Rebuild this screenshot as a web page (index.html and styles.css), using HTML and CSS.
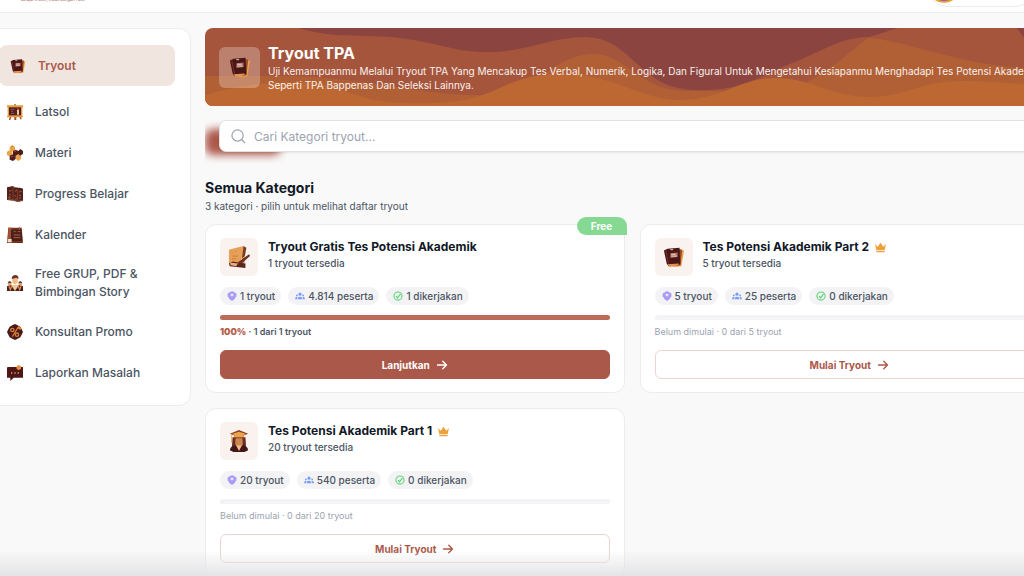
FILE: index.html
```html
<!DOCTYPE html>
<html lang="id">
  <head>
    <meta charset="utf-8">
    <meta name="viewport" content="width=device-width, initial-scale=1">
    <title>Tryout TPA</title>
    <link rel="stylesheet" href="styles.css">
  </head>
  <body>
    <!-- shared icons -->
    <svg class="sprite" aria-hidden="true">
      <symbol id="book" viewBox="0 0 24 24">
        <path d="M13 4l10 1-3 17-9 1z" fill="#eda348"/>
        <path d="M16 3l5 1-2 17-5 1z" fill="#9b4b2c"/>
        <path d="M1 5l4-2 13-1 1 18-13 2-2-3z" fill="#4a1716"/>
        <path d="M3 5l3 14" stroke="#7c3428" stroke-width="1"/>
        <path d="M5 20l12-1v2L7 23z" fill="#df9256"/>
        <path d="M8 8l8-1v5l-8 1z" fill="#a86d62"/>
        <path d="M9 9h5M9 11h6M8 4h3" stroke="#f6dccb" stroke-width="1"/>
      </symbol>
      <symbol id="board" viewBox="0 0 24 24">
        <path d="M11 0h2v4h-2zM4 18h3l-2 6H3zM11 18h3v6h-3zM18 18h3l1 5h-2z" fill="#a54b28"/>
        <path d="M0 2h24v3h-1v13h1v2H0v-2h1V5H0z" fill="#e69a41"/>
        <path d="M3 5h18v12H3z" fill="#54201d"/>
        <path d="M6 8h5M6 11h3M6 14h5" stroke="#a87362" stroke-width="1"/>
        <path d="M15 8h3v8h-3z" fill="#f1c8a2"/>
        <path d="M16 6v3" stroke="#a64631" stroke-width="2"/>
      </symbol>
      <symbol id="hex" viewBox="0 0 24 24">
        <path d="M8 0l4 3v5l-4 2-4-2V3zM4 8l4 2v5l-4 2-4-2v-5zM17 14l4 2v5l-4 3-4-3v-5z" fill="#e9a448"/>
        <path d="M13 7l4 2v5l-4 2-4-2V9zM20 6l4 3v4l-4 3-3-2V9zM9 14l4 2v5l-4 3-5-2v-6z" fill="#501b18"/>
        <path d="M6 3l3-1M11 10l3-1M6 18l3-1" stroke="#c37338" stroke-width="1"/>
      </symbol>
      <symbol id="progress" viewBox="0 0 24 24">
        <path d="M0 2l9-2 2 2 10 1 3 1v18l-8 2-6-2-10-1z" fill="#51201b"/>
        <path d="M9 2v20M16 5v17" stroke="#a24d32" stroke-width="1"/>
        <path d="M3 7l2 1 2-2M3 12l3 2M3 19v-3l3 2M12 8l3-2M11 14l3 2M12 20l3-1M18 9l4-1M18 14h3M18 19l3-2" stroke="#c5814f" stroke-width="1" fill="none"/>
        <path d="M1 20l8 1 7 2 7-1" stroke="#b2634c" fill="none"/>
      </symbol>
      <symbol id="calendar" viewBox="0 0 24 24">
        <path d="M2 1h20l2 23H0z" fill="#76321f"/>
        <path d="M2 1h5v19H1z" fill="#9c5130"/>
        <path d="M6 4h16l1 17H6z" fill="#48201c"/>
        <path d="M1 18h6v5H1z" fill="#f4d7c6"/>
        <path d="M4 1v3M19 0v4M10 7h3M16 7h4M10 12h10M10 16h10" stroke="#b85d3a" stroke-width="1.5"/>
      </symbol>
      <symbol id="people" viewBox="0 0 24 24">
        <path d="M0 24v-7l5-2h14l5 2v7z" fill="#47211e"/>
        <circle cx="4" cy="13" r="3" fill="#dca077"/>
        <circle cx="20" cy="13" r="3" fill="#dca077"/>
        <path d="M1 12q3-6 6 0zM17 12q3-6 6 0z" fill="#7a3927"/>
        <path d="M8 5q4-6 8 0v6q-4 6-8 0z" fill="#efbb88"/>
        <path d="M7 6q0-6 6-6 5 1 4 6l-3-2z" fill="#6b3428"/>
        <path d="M6 15h12l-6 9z" fill="#f4c595"/>
        <path d="M3 17l2 5 2-5M17 17l2 5 2-5" stroke="#dc8949" stroke-width="2" fill="none"/>
      </symbol>
      <symbol id="promo" viewBox="0 0 24 24">
        <path d="M12 0l4 2 4 2 2 4 2 4-2 4-2 4-4 2-4 2-4-2-4-2-2-4-2-4 2-4 2-4 4-2z" fill="#491a17"/>
        <path d="M16 6L8 19" stroke="#d77b39" stroke-width="2"/>
        <circle cx="8" cy="9" r="2.5" fill="none" stroke="#d77b39" stroke-width="2"/>
        <circle cx="15" cy="16" r="2.500" fill="none" stroke="#d77b39" stroke-width="2"/>
        <path d="M17 3l5 3-2 3-5-3z" fill="#e28a36"/>
      </symbol>
      <symbol id="report" viewBox="0 0 24 24">
        <path d="M1 3h22q1 0 1 1v15H10l-5 5v-5H0V4z" fill="#4c1716"/>
        <path d="M15 1l3-1 3 2v4l-4 2-3-3z" fill="#e29042"/>
        <path d="M6 12h2M11 12h2M16 12h2" stroke="#dd9b58" stroke-width="2"/>
      </symbol>
      <symbol id="scroll" viewBox="0 0 24 24">
        <path d="M1 4l4-1 12-3 2 4-1 15-9 3-8-2z" fill="#e7a057"/>
        <path d="M17 0l3 2-3 16-2-2z" fill="#7b3925"/>
        <path d="M1 19l4-2 14 2v5L2 22z" fill="#5b251e"/>
        <path d="M2 18l9 1-2 3-6-1z" fill="#e8ad79"/>
        <path d="M23 9l1 2-8 7-6 3 2-4z" fill="#692d23"/>
        <path d="M14 15l5-4" stroke="#f0bc81" stroke-width="1"/>
        <path d="M4 7h1M8 6h1M5 11h6M4 14h5" stroke="#c87d40" stroke-width="1"/>
      </symbol>
      <symbol id="graduate" viewBox="0 0 24 24">
        <path d="M5 8h14l1 14H4z" fill="#6a2b22"/>
        <path d="M8 6h8v10q-4 6-8 0z" fill="#cb8752"/>
        <path d="M7 8q5-4 10 0v5q-1-4-3-5-2 1-4 0-2 1-3 5z" fill="#7a3423"/>
        <path d="M2 4l10-4 10 4-5 2v3H7V6z" fill="#8d4124"/>
        <path d="M5 4l7-2 7 2-2 2v2H7V6z" fill="#eda34b"/>
        <path d="M2 22q1-5 6-5l4 4 4-4q5 0 6 5l-4 2H6z" fill="#431718"/>
        <path d="M9 17l3 6 3-6z" fill="#f1c092"/>
        <path d="M4 5v9" stroke="#e8a454" stroke-width="1"/>
      </symbol>
      <symbol id="layers" viewBox="0 0 16 16">
        <path d="M8 9l5-2v5l-5 4-5-4V7z" fill="#ab9af3"/>
        <path d="M1 4l7-4 7 4v5l-7 4-7-4z" fill="#ab9af3"/>
        <path d="M5 6l3-2 3 2-3 3z" fill="#eeeafd"/>
      </symbol>
      <symbol id="users" viewBox="0 0 16 16">
        <circle cx="8" cy="5" r="2.5"/>
        <circle cx="3" cy="7" r="1.5"/>
        <circle cx="13" cy="7" r="1.5"/>
        <path d="M4 13q0-4 4-4t4 4zM0 13q0-4 3-4 1 0 1 1-1 1-1 3zM16 13q0-4-3-4-1 0-1 1 1 1 1 3z"/>
      </symbol>
      <symbol id="check" viewBox="0 0 16 16">
        <circle cx="8" cy="8" r="6.5" fill="none" stroke="currentColor" stroke-width="1.8"/>
        <path d="M5 8l2 3 5-6" fill="none" stroke="currentColor" stroke-width="2"/>
      </symbol>
      <symbol id="crown" viewBox="0 0 16 16">
        <path d="M0 3l4 4 4-6 4 6 4-4-2 9H2zM2 13h12v2H2z"/>
      </symbol>
      <symbol id="arrow" viewBox="0 0 16 16">
        <path d="M2 8h12M9 3l5 5-5 5" fill="none" stroke="currentColor" stroke-width="1.8" stroke-linecap="round" stroke-linejoin="round"/>
      </symbol>
    </svg>

    <div class="app">
      <header class="topbar">
        <p class="tagline">Belajar Efektif, Lulus dengan Pasti</p>
        <div class="profile"><span class="avatar"></span></div>
      </header>

      <div class="layout">
        <nav class="sidebar">
          <a class="nav-item active" href="#"><svg class="nav-icon"><use href="#book"/></svg>Tryout</a>
          <a class="nav-item" href="#"><svg class="nav-icon"><use href="#board"/></svg>Latsol</a>
          <a class="nav-item" href="#"><svg class="nav-icon"><use href="#hex"/></svg>Materi</a>
          <a class="nav-item" href="#"><svg class="nav-icon"><use href="#progress"/></svg>Progress Belajar</a>
          <a class="nav-item" href="#"><svg class="nav-icon"><use href="#calendar"/></svg>Kalender</a>
          <a class="nav-item" href="#"><svg class="nav-icon"><use href="#people"/></svg>Free GRUP, PDF &amp;<br>Bimbingan Story</a>
          <a class="nav-item" href="#"><svg class="nav-icon"><use href="#promo"/></svg>Konsultan Promo</a>
          <a class="nav-item" href="#"><svg class="nav-icon"><use href="#report"/></svg>Laporkan Masalah</a>
        </nav>

        <main class="main">
          <section class="banner">
            <svg class="waves" viewBox="0 0 853 78" preserveAspectRatio="none" aria-hidden="true">
              <path d="M94 0C130 11 160 6 194 10C230 14 250 24 279 24C320 25 345 9 379 9C405 9 418 24 434 38C450 52 462 61 490 62C540 64 560 44 594 32C625 18 640 9 664 9L692 0Z" fill="#8b4440"/>
              <path d="M811 0Q816 9 826 16L853 30V0Z" fill="#8b4440"/>
              <path d="M0 48H80C150 48 215 67 270 67C335 68 345 26 389 26C420 26 435 63 480 63H564C600 63 625 40 662 10C700 12 750 36 818 40L853 42V78H0Z" fill="#b16036"/>
              <path d="M0 67C30 58 60 54 94 54C135 54 150 75 200 75C245 76 265 73 290 62C315 50 330 46 355 46C410 46 435 72 474 72C520 72 530 50 571 50C605 50 625 69 664 69C700 69 715 53 754 53C795 53 820 57 853 59V78H0Z" fill="#bd6832"/>
            </svg>
            <div class="banner-icon"><svg><use href="#book"/></svg></div>
            <div class="banner-text">
              <h1>Tryout TPA</h1>
              <p>Uji Kemampuanmu Melalui Tryout TPA Yang Mencakup Tes Verbal, Numerik, Logika, Dan Figural Untuk Mengetahui Kesiapanmu Menghadapi Tes Potensi Akademik<br>Seperti TPA Bappenas Dan Seleksi Lainnya.</p>
            </div>
          </section>

          <div class="search-row">
            <div class="tab-glow"></div>
            <label class="search">
              <svg viewBox="0 0 16 16"><circle cx="7" cy="7" r="6"/><path d="M11.500 11.500L15 15"/></svg>
              <input type="search" placeholder="Cari Kategori tryout..." aria-label="Cari Kategori tryout">
            </label>
          </div>

          <h2>Semua Kategori</h2>
          <p class="subtitle">3 kategori · pilih untuk melihat daftar tryout</p>

          <div class="cards">
            <article class="card">
              <span class="badge">Free</span>
              <div class="card-head">
                <div class="card-icon"><svg><use href="#scroll"/></svg></div>
                <div>
                  <h3>Tryout Gratis Tes Potensi Akademik</h3>
                  <p>1 tryout tersedia</p>
                </div>
              </div>
              <div class="chips">
                <span class="chip"><svg class="violet"><use href="#layers"/></svg>1 tryout</span>
                <span class="chip"><svg class="blue"><use href="#users"/></svg>4.814 peserta</span>
                <span class="chip"><svg class="green"><use href="#check"/></svg>1 dikerjakan</span>
              </div>
              <div class="bar"><div class="bar-fill" style="width: 100%"></div></div>
              <p class="status done"><b>100%</b> · 1 dari 1 tryout</p>
              <button class="button filled" type="button">Lanjutkan <svg><use href="#arrow"/></svg></button>
            </article>

            <article class="card">
              <div class="card-head">
                <div class="card-icon"><svg><use href="#book"/></svg></div>
                <div>
                  <h3>Tes Potensi Akademik Part 2 <svg class="crown"><use href="#crown"/></svg></h3>
                  <p>5 tryout tersedia</p>
                </div>
              </div>
              <div class="chips">
                <span class="chip"><svg class="violet"><use href="#layers"/></svg>5 tryout</span>
                <span class="chip"><svg class="blue"><use href="#users"/></svg>25 peserta</span>
                <span class="chip"><svg class="green"><use href="#check"/></svg>0 dikerjakan</span>
              </div>
              <div class="bar"></div>
              <p class="status">Belum dimulai · 0 dari 5 tryout</p>
              <button class="button" type="button">Mulai Tryout <svg><use href="#arrow"/></svg></button>
            </article>

            <article class="card">
              <div class="card-head">
                <div class="card-icon"><svg><use href="#graduate"/></svg></div>
                <div>
                  <h3>Tes Potensi Akademik Part 1 <svg class="crown"><use href="#crown"/></svg></h3>
                  <p>20 tryout tersedia</p>
                </div>
              </div>
              <div class="chips">
                <span class="chip"><svg class="violet"><use href="#layers"/></svg>20 tryout</span>
                <span class="chip"><svg class="blue"><use href="#users"/></svg>540 peserta</span>
                <span class="chip"><svg class="green"><use href="#check"/></svg>0 dikerjakan</span>
              </div>
              <div class="bar"></div>
              <p class="status">Belum dimulai · 0 dari 20 tryout</p>
              <button class="button" type="button">Mulai Tryout <svg><use href="#arrow"/></svg></button>
            </article>
          </div>
        </main>
      </div>
    </div>
    <div class="page-fade"></div>
  </body>
</html>
```

FILE: styles.css
```css
* {
  box-sizing: border-box;
}
html {
  font-family: Inter, "Open Sans", sans-serif;
}
body {
  margin: 0;
  height: 100vh;
  overflow: hidden;
  background-color: #f9f9f9;
  color: #4b5563;
}
h1, h2, h3, p {
  margin: 0;
}
.sprite {
  display: none;
}
/* the shell runs past the window on three sides */
.app {
  margin: -47px -35px 0 -17px;
}
.topbar {
  display: flex;
  justify-content: space-between;
  align-items: flex-end;
  height: 60px;
  padding: 0 24px 0 38px;
  background-color: #fff;
  border-bottom: 1px solid #eeeeef;
}
.tagline {
  margin-bottom: 9px;
  font-size: 4px;
  line-height: 6px;
  color: #9c5a50;
}
.profile {
  width: 108px;
  height: 40px;
  margin-bottom: 5px;
  padding: 3px 0 0 0;
  border: 1px solid #ececee;
  border-radius: 20px;
}
.avatar {
  display: block;
  width: 32px;
  height: 32px;
  border: 2px solid #e9a23c;
  border-radius: 50%;
  background-color: #8f5fc0;
}
.layout {
  display: flex;
  align-items: flex-start;
  gap: 14px;
  padding-top: 15px;
}

.sidebar {
  display: flex;
  flex-direction: column;
  flex: none;
  width: 208px;
  padding: 16px 15px 12px;
  background-color: #fff;
  border: 1px solid #ececec;
  border-radius: 12px;
}
.nav-item {
  display: flex;
  align-items: center;
  gap: 12px;
  min-height: 41px;
  padding: 10px 8px;
  border-radius: 8px;
  color: #4b5563;
  font-size: 12px;
  line-height: 18px;
  font-weight: 500;
  text-decoration: none;
}
.nav-item.active {
  margin-bottom: 5px;
  padding-left: 11px;
  background-color: #f1e5df;
  color: #ab5a4a;
  font-weight: 600;
}
.nav-icon {
  flex: none;
  width: 16px;
  height: 16px;
}

.main {
  flex: 1;
  min-width: 0;
}
.banner {
  position: relative;
  display: flex;
  align-items: center;
  gap: 8px;
  height: 78px;
  padding: 0 14px;
  overflow: hidden;
  border-radius: 8px;
  background-color: #a4553c;
  color: #fff;
}
.waves {
  position: absolute;
  inset: 0;
  width: 100%;
  height: 100%;
}
.banner-icon {
  position: relative;
  display: grid;
  place-items: center;
  flex: none;
  width: 41px;
  height: 41px;
  border-radius: 6px;
  background-color: rgba(255, 255, 255, 0.26);
}
.banner-icon svg {
  width: 22px;
  height: 22px;
}
.banner-text {
  position: relative;
  white-space: nowrap;
}
.banner h1 {
  font-size: 16px;
  line-height: 22px;
}
.banner p {
  color: #fbf0eb;
  font-size: 10px;
  line-height: 14px;
}

.search-row {
  position: relative;
  height: 46px;
  margin-top: 14px;
  padding: 0 14px;
  overflow: hidden;
}
.tab-glow {
  position: absolute;
  top: 9px;
  left: 0;
  width: 76px;
  height: 26px;
  border-radius: 8px;
  background-color: #ab5849;
  filter: blur(4px);
}
.search {
  position: relative;
  display: flex;
  align-items: center;
  gap: 8px;
  height: 32px;
  padding: 0 11px;
  border: 1px solid #e0e1e5;
  border-radius: 7px;
  background-color: #fff;
  box-shadow: 0 1px 2px rgba(0, 0, 0, 0.08);
}
.search svg {
  flex: none;
  width: 15px;
  height: 15px;
  fill: none;
  stroke: #9ca3af;
  stroke-width: 1.3;
}
.search input {
  flex: 1;
  min-width: 0;
  padding: 0;
  border: 0;
  outline: 0;
  background: none;
  font-family: inherit;
  font-size: 12px;
}
.search input::placeholder {
  color: #9ca3af;
}

h2 {
  margin-top: 12px;
  color: #111827;
  font-size: 14px;
  line-height: 20px;
}
.subtitle {
  font-size: 10px;
  line-height: 16px;
}
.cards {
  display: grid;
  grid-template-columns: 1fr 1fr;
  gap: 15px;
  margin-top: 10px;
}
.card {
  position: relative;
  display: flex;
  flex-direction: column;
  padding: 13px 14px;
  border: 1px solid #ececee;
  border-radius: 11px;
  background-color: #fff;
}
.badge {
  position: absolute;
  top: -8px;
  right: -3px;
  width: 50px;
  border-radius: 9px 9px 0 9px;
  background-color: #86d993;
  color: #fff;
  font-size: 10px;
  line-height: 18px;
  font-weight: 700;
  text-align: center;
}
.card-head {
  display: flex;
  gap: 10px;
}
.card-icon {
  display: grid;
  place-items: center;
  flex: none;
  width: 38px;
  height: 38px;
  border-radius: 6px;
  background-color: #f9f2ef;
}
.card-icon svg {
  width: 22px;
  height: 22px;
}
.card h3 {
  display: flex;
  align-items: center;
  gap: 6px;
  color: #111827;
  font-size: 12px;
  line-height: 18px;
}
.crown {
  width: 11px;
  height: 11px;
  fill: #eda13c;
}
.card-head p {
  font-size: 10px;
  line-height: 15px;
  font-weight: 500;
}
.chips {
  display: flex;
  gap: 7px;
  margin-top: 11px;
}
.chip {
  display: flex;
  align-items: center;
  gap: 3px;
  height: 18px;
  padding: 0 6px 0 7px;
  border-radius: 9px;
  background-color: #f3f3f5;
  font-size: 10px;
  font-weight: 500;
}
.chip svg {
  width: 10px;
  height: 10px;
}
.blue {
  fill: #7c9df5;
}
.green {
  color: #62d47c;
}
.bar {
  height: 5px;
  margin-top: 10px;
  overflow: hidden;
  border-radius: 3px;
  background-color: #f3f3f5;
}
.bar-fill {
  height: 100%;
  background-color: #bb6b57;
}
.status {
  margin-top: 5px;
  color: #9ca3af;
  font-size: 9px;
  line-height: 14px;
}
.status.done {
  color: #4b5563;
  font-weight: 600;
}
.status b {
  color: #b5604d;
}
.button {
  display: flex;
  align-items: center;
  justify-content: center;
  gap: 6px;
  height: 29px;
  margin-top: 11px;
  border: 1px solid #eed5cb;
  border-radius: 6px;
  background-color: #fff;
  color: #ab5849;
  font-family: inherit;
  font-size: 10px;
  font-weight: 700;
}
.button.filled {
  border-color: #aa5849;
  background-color: #aa5849;
  color: #fff;
}
.button svg {
  width: 12px;
  height: 12px;
}
.page-fade {
  position: fixed;
  right: 0;
  bottom: 0;
  left: 0;
  height: 26px;
  background: linear-gradient(rgba(225, 226, 228, 0), rgba(225, 226, 228, 0.9));
  pointer-events: none;
}
```
